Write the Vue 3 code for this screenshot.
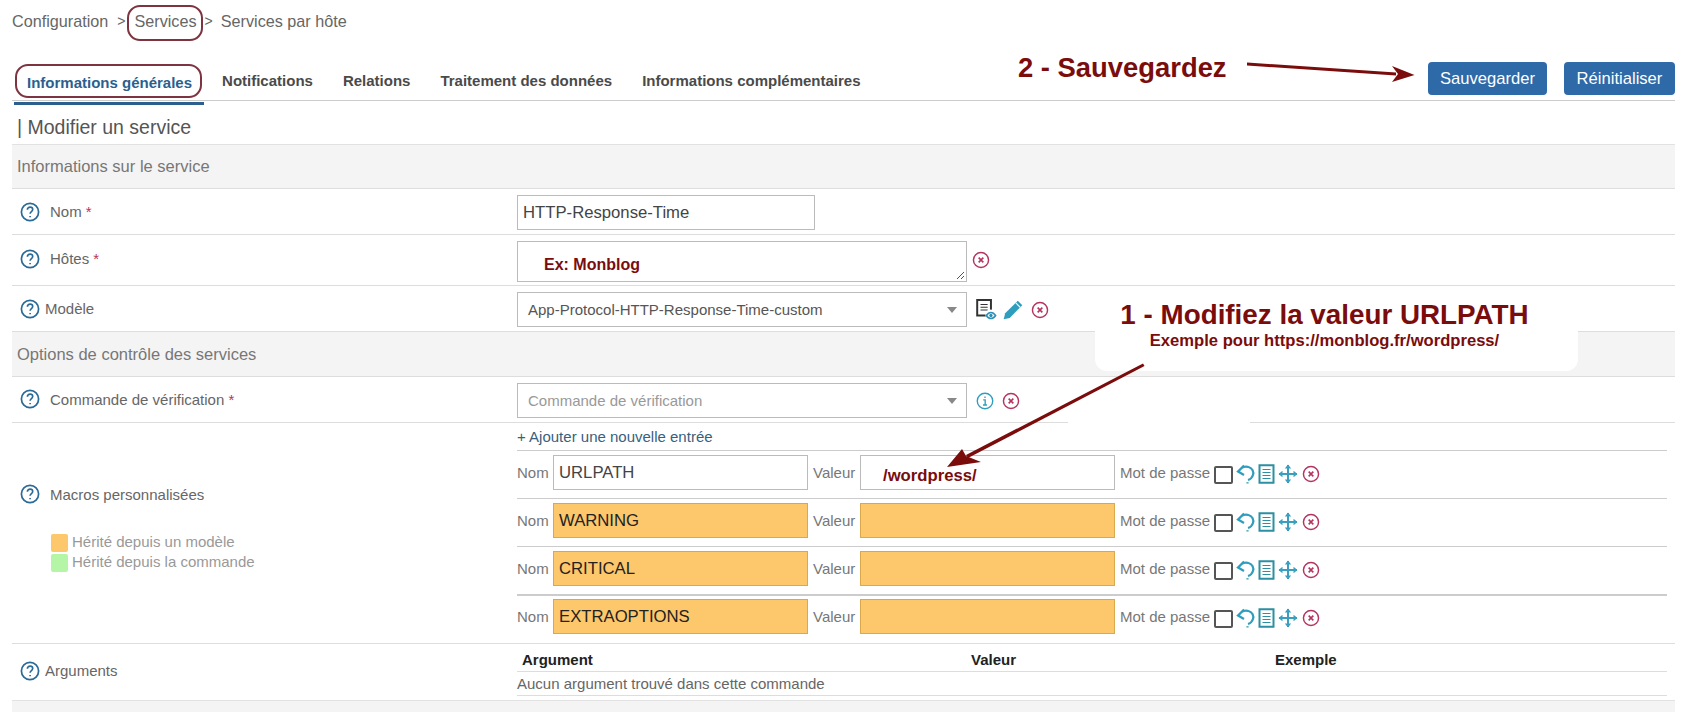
<script setup>
const macros = [
  { name: 'URLPATH', value: '/wordpress/', inherited: false },
  { name: 'WARNING', value: '', inherited: true },
  { name: 'CRITICAL', value: '', inherited: true },
  { name: 'EXTRAOPTIONS', value: '', inherited: true },
]
</script>

<template>
  <div class="page">
    <nav class="crumbs">
      <span>Configuration</span>
      <span class="sep sep-a">&gt;</span>
      <span class="circled">Services</span>
      <span class="sep sep-b">&gt;</span>
      <span>Services par hôte</span>
    </nav>

    <div class="topbar">
      <div class="tabs">
        <a class="tab active"><span class="tab-label">Informations générales</span></a>
        <a class="tab">Notifications</a>
        <a class="tab">Relations</a>
        <a class="tab">Traitement des données</a>
        <a class="tab">Informations complémentaires</a>
      </div>
      <div class="actions">
        <button class="btn">Sauvegarder</button>
        <button class="btn">Réinitialiser</button>
      </div>
    </div>

    <h2 class="title">| Modifier un service</h2>

    <div class="section">Informations sur le service</div>

    <div class="row row-nom">
      <div class="label">
        <svg class="help" viewBox="0 0 20 20"><circle cx="10" cy="10" r="8.6" /><path d="M7.4 7.8c0-1.6 1.2-2.6 2.7-2.6s2.6 1 2.6 2.3c0 2-2.6 2.1-2.6 4.3" /><path d="M10.1 13.9v1.4" /></svg>
        <span class="label-text">Nom <i>*</i></span>
      </div>
      <div class="field-cell"><div class="input input-short">HTTP-Response-Time</div></div>
    </div>

    <div class="row row-hosts">
      <div class="label">
        <svg class="help" viewBox="0 0 20 20"><circle cx="10" cy="10" r="8.6" /><path d="M7.4 7.8c0-1.6 1.2-2.6 2.7-2.6s2.6 1 2.6 2.3c0 2-2.6 2.1-2.6 4.3" /><path d="M10.1 13.9v1.4" /></svg>
        <span class="label-text">Hôtes <i>*</i></span>
      </div>
      <div class="field-cell">
        <div class="input textarea">
          <span class="red-note">Ex: Monblog</span>
          <svg class="grip" viewBox="0 0 10 10"><path d="M2 9 9 2M6 9l3-3" /></svg>
        </div>
        <svg class="ico-close" viewBox="0 0 20 20"><circle cx="10" cy="10" r="8.4" /><path d="m7.4 7.4 5.2 5.2M12.6 7.4l-5.2 5.2" /></svg>
      </div>
    </div>

    <div class="row row-model">
      <div class="label">
        <svg class="help" viewBox="0 0 20 20"><circle cx="10" cy="10" r="8.6" /><path d="M7.4 7.8c0-1.6 1.2-2.6 2.7-2.6s2.6 1 2.6 2.3c0 2-2.6 2.1-2.6 4.3" /><path d="M10.1 13.9v1.4" /></svg>
        <span class="label-text tight">Modèle</span>
      </div>
      <div class="field-cell">
        <div class="input select">App-Protocol-HTTP-Response-Time-custom</div>
        <svg class="ico-doc-eye" viewBox="0 0 20 20">
          <path class="dark" d="M2 1h12.5v14H2z" />
          <path class="dark thin" d="M5 5h6.5M5 7.5h6.5M5 10h6.5" />
          <circle class="eye-bg" cx="14.5" cy="14.5" r="5" />
          <path class="eye" d="M10.3 15c1.2-1.8 2.7-2.7 4.2-2.7s3 .9 4.2 2.7c-1.2 1.8-2.7 2.7-4.2 2.7s-3-.9-4.2-2.7z" />
          <circle class="eye-dot" cx="14.5" cy="15" r="1.5" />
        </svg>
        <svg class="ico-pencil" viewBox="0 0 20 20"><path d="M14.4 1.5 18.5 5.6 7 17.2 1.5 18.5 2.9 13z" /><path class="cut" d="m12.6 3.6 4 4" /></svg>
        <svg class="ico-close" viewBox="0 0 20 20"><circle cx="10" cy="10" r="8.4" /><path d="m7.4 7.4 5.2 5.2M12.6 7.4l-5.2 5.2" /></svg>
      </div>
    </div>

    <div class="section">Options de contrôle des services</div>

    <div class="row row-command">
      <div class="label">
        <svg class="help" viewBox="0 0 20 20"><circle cx="10" cy="10" r="8.6" /><path d="M7.4 7.8c0-1.6 1.2-2.6 2.7-2.6s2.6 1 2.6 2.3c0 2-2.6 2.1-2.6 4.3" /><path d="M10.1 13.9v1.4" /></svg>
        <span class="label-text">Commande de vérification <i>*</i></span>
      </div>
      <div class="field-cell">
        <div class="input select placeholder">Commande de vérification</div>
        <svg class="ico-info" viewBox="0 0 20 20"><circle cx="10" cy="10" r="8.6" /><path d="M8 8.7h2.2v5.500M7.800 14.400h4.400" /><path d="M10 5v1.600" /></svg>
        <svg class="ico-close" viewBox="0 0 20 20"><circle cx="10" cy="10" r="8.4" /><path d="m7.4 7.4 5.2 5.2M12.6 7.4l-5.2 5.2" /></svg>
      </div>
    </div>

    <div class="row row-macros">
      <div class="macro-side">
        <div class="label">
          <svg class="help" viewBox="0 0 20 20"><circle cx="10" cy="10" r="8.6" /><path d="M7.4 7.8c0-1.6 1.2-2.6 2.7-2.6s2.6 1 2.6 2.3c0 2-2.6 2.1-2.6 4.3" /><path d="M10.1 13.9v1.4" /></svg>
          <span class="label-text">Macros personnalisées</span>
        </div>
        <div class="legend">
          <div class="legend-item"><span class="swatch orange"></span>Hérité depuis un modèle</div>
          <div class="legend-item"><span class="swatch green"></span>Hérité depuis la commande</div>
        </div>
      </div>
      <div class="macro-list">
        <a class="add-link">+ Ajouter une nouvelle entrée</a>
        <div v-for="m in macros" :key="m.name" class="macro-row">
          <span class="mini-label name-label">Nom</span>
          <div class="macro-input" :class="{ inherited: m.inherited }">{{ m.name }}</div>
          <span class="mini-label value-label">Valeur</span>
          <div class="macro-input" :class="{ inherited: m.inherited }"><span v-if="m.value" class="red-value">{{ m.value }}</span></div>
          <span class="mini-label pass-label">Mot de passe</span>
          <span class="checkbox"></span>
          <svg class="ico-undo" viewBox="0 0 20 20"><path d="M8 1.500 2 7.500 8 11M3 7C5 3.500 9 2 12.500 3 16.500 4 18 8 17 11 16 14 14 15.500 12 16" /><path d="M11.500 18.200v1.300" /></svg>
          <svg class="ico-list" viewBox="0 0 17 20"><path d="M1.500 1.300h14v17.400h-14z" /><path class="thin" d="M4.500 5.500h8M4.500 8.500h8M4.500 11.500h8M4.500 14.500h8" /></svg>
          <svg class="ico-move" viewBox="0 0 20 20"><path class="thin-move" d="M10 1v18M1 10h18" /><path class="fill" d="M10 .5 13.200 4.500H6.800zM10 19.500 6.800 15.500h6.400zM.5 10 4.500 6.800v6.400zM19.500 10 15.500 13.200V6.800z" /></svg>
          <svg class="ico-close small" viewBox="0 0 20 20"><circle cx="10" cy="10" r="8.4" /><path d="m7.4 7.4 5.2 5.2M12.6 7.4l-5.2 5.2" /></svg>
        </div>
      </div>
    </div>

    <div class="row row-args">
      <div class="label">
        <svg class="help" viewBox="0 0 20 20"><circle cx="10" cy="10" r="8.6" /><path d="M7.4 7.8c0-1.6 1.2-2.6 2.7-2.6s2.6 1 2.6 2.3c0 2-2.6 2.1-2.6 4.3" /><path d="M10.1 13.9v1.4" /></svg>
        <span class="label-text tight">Arguments</span>
      </div>
      <div class="args">
        <div class="args-head">
          <span class="col-arg">Argument</span>
          <span class="col-val">Valeur</span>
          <span>Exemple</span>
        </div>
        <div class="args-empty">Aucun argument trouvé dans cette commande</div>
      </div>
    </div>

    <div class="section section-end"></div>

    <!-- annotations pasted on top of the screenshot -->
    <div class="note-save">2 - Sauvegardez</div>
    <div class="line-gap"></div>
    <div class="callout">
      <div class="callout-title">1 - Modifiez la valeur URLPATH</div>
      <div class="callout-sub">Exemple pour https://monblog.fr/wordpress/</div>
    </div>
    <svg class="arrows" viewBox="0 0 1688 712">
      <path d="M1247 62.500 1396 72.500 1396 75.500 1247 65.500z" />
      <path d="M1414.500 75 1392 66 1398 74 1392 82z" />
      <path d="M1143 363.500 1144.500 366 968 458 966 455z" />
      <path d="M947 467 962 449 966 456 981 462z" />
    </svg>
  </div>
</template>

<style scoped>
.page {
  position: relative;
  width: 1688px;
  height: 712px;
  overflow: hidden;
  box-sizing: border-box;
  padding: 0 13px 0 12px;
  background: #fff;
  font-family: "Liberation Sans", Arial, sans-serif;
  font-size: 15px;
  color: #666;
}

.crumbs {
  height: 44px;
  display: flex;
  align-items: flex-start;
  padding-top: 12px;
  box-sizing: border-box;
  font-size: 16.2px;
  line-height: 19px;
  color: #666;
}

.sep {
  font-size: 14px;
}

.sep-a {
  margin: 0 9px;
}

.sep-b {
  margin: 0 8px;
}

.circled {
  position: relative;
}

.circled::after {
  content: "";
  position: absolute;
  left: -7px;
  right: -6px;
  top: -7px;
  height: 36px;
  box-sizing: border-box;
  border: 2px solid #7d3340;
  border-radius: 13px;
}

.topbar {
  height: 57px;
  display: flex;
  justify-content: space-between;
  border-bottom: 1px solid #ccc;
  box-sizing: border-box;
}

.tabs {
  display: flex;
  align-items: flex-start;
  padding-top: 28px;
}

.tab {
  padding: 0 15px;
  font-size: 15px;
  line-height: 18px;
  font-weight: 700;
  color: #4a4a4a;
}

.tab.active {
  position: relative;
  height: 28px;
  padding: 2px 12px 0 13px;
  margin: 0 3px 0 2px;
  color: #2b5f8e;
  border-bottom: 3px solid #2b5f8e;
}

.tab-label {
  display: block;
}

.tab.active::after {
  content: "";
  position: absolute;
  left: 1px;
  right: 2px;
  top: -8px;
  height: 34px;
  box-sizing: border-box;
  border: 2px solid #7d3340;
  border-radius: 13px;
}

.actions {
  display: flex;
  align-items: flex-start;
  gap: 17px;
  padding-top: 18px;
}

.btn {
  height: 33px;
  padding: 0;
  border: 0;
  border-radius: 4px;
  background: #2e69a8;
  color: #fff;
  font: 16.6px "Liberation Sans", Arial, sans-serif;
}

.btn:first-child {
  width: 119px;
}

.btn:last-child {
  width: 111px;
}

.title {
  margin: 0;
  height: 43px;
  padding: 15px 0 0 5px;
  box-sizing: border-box;
  font-size: 19.5px;
  line-height: 23px;
  font-weight: 400;
  color: #555;
}

.section {
  height: 45px;
  padding-left: 5px;
  box-sizing: border-box;
  display: flex;
  align-items: center;
  background: #f4f4f4;
  border-top: 1px solid #e2e2e2;
  border-bottom: 1px solid #ddd;
  font-size: 16.5px;
  color: #777;
}

.row {
  display: grid;
  grid-template-columns: 505px 1fr;
  box-sizing: border-box;
  border-bottom: 1px solid #ddd;
}

.row-nom { height: 46px; }
.row-hosts { height: 51px; }
.row-model { height: 46px; }
.row-command { height: 46px; }
.row-macros { height: 221px; }
.row-args { height: 57px; border-bottom-color: #e2e2e2; }

.row-model + .section {
  border-top: 0;
}

.row-hosts .label,
.row-args .label {
  padding-bottom: 3px;
}

.row-command .label {
  padding-bottom: 1px;
}

.label {
  display: flex;
  align-items: center;
  padding-left: 8px;
}

.label-text {
  margin-left: 10px;
  color: #666;
  font-size: 15px;
}

.label-text.tight {
  margin-left: 5px;
}

.label-text i {
  font-style: normal;
  color: #b5345f;
}

.help {
  width: 20px;
  height: 20px;
  flex: none;
  fill: none;
  stroke: #2a6a96;
  stroke-width: 1.7;
}

.field-cell {
  display: flex;
  align-items: center;
  padding-top: 2px;
}

.input {
  box-sizing: border-box;
  height: 35px;
  display: flex;
  align-items: center;
  border: 1px solid #bbb;
  padding: 0 5px;
  font-size: 16.7px;
  color: #444;
}

.input-short {
  width: 298px;
}

.textarea {
  position: relative;
  width: 450px;
  height: 41px;
  padding: 7px 0 0 26px;
}

.grip {
  position: absolute;
  right: 1px;
  bottom: 1px;
  width: 10px;
  height: 10px;
  fill: none;
  stroke: #555;
  stroke-width: 1;
}

.red-note {
  font-weight: 700;
  font-size: 16px;
  color: #7a0c0c;
}

.select {
  position: relative;
  width: 450px;
  padding-left: 10px;
  font-size: 15px;
  color: #555;
}

.select::after {
  content: "";
  position: absolute;
  right: 9px;
  top: 14px;
  border-left: 5px solid transparent;
  border-right: 5px solid transparent;
  border-top: 6px solid #888;
}

.placeholder {
  color: #999;
}

.ico-close {
  width: 18px;
  height: 18px;
  margin-left: 5px;
  flex: none;
  fill: none;
  stroke: #b5345f;
  stroke-width: 1.6;
}

.ico-close path {
  stroke-width: 1.8;
}

.row-hosts .ico-close {
  margin-top: -2px;
}

.ico-doc-eye {
  width: 22px;
  height: 22px;
  margin-left: 8px;
  flex: none;
}

.ico-doc-eye .dark {
  fill: #fff;
  stroke: #333;
  stroke-width: 1.8;
}

.ico-doc-eye .thin {
  stroke-width: 1;
}

.eye-bg {
  fill: #fff;
}

.eye {
  fill: #fff;
  stroke: #2f8fb5;
  stroke-width: 1.5;
}

.eye-dot {
  fill: #2f8fb5;
}

.ico-pencil {
  width: 22px;
  height: 22px;
  margin-left: 5px;
  flex: none;
  fill: #2f9dbd;
}

.ico-pencil .cut {
  fill: none;
  stroke: #fff;
  stroke-width: 1;
}

.row-model .ico-close {
  margin-left: 7px;
}

.ico-info {
  width: 18px;
  height: 18px;
  margin-left: 9px;
  flex: none;
  fill: none;
  stroke: #2f9dbd;
  stroke-width: 1.5;
}

.ico-info + .ico-close {
  margin-left: 8px;
}

.macro-side {
  padding-top: 61px;
}

.legend {
  margin-top: 28px;
  margin-left: 39px;
  font-size: 15px;
  line-height: 20px;
  color: #999;
}

.legend-item {
  display: flex;
  align-items: flex-end;
  height: 20px;
}

.swatch {
  width: 17px;
  height: 18px;
  border-radius: 2px;
  margin-right: 4px;
}

.orange { background: #fdc76b; }
.green { background: #b4f5a6; }

.macro-list {
  padding-right: 8px;
}

.add-link {
  display: block;
  height: 27px;
  line-height: 28px;
  font-size: 15px;
  color: #3a5f7d;
}

.macro-row {
  display: flex;
  align-items: center;
  height: 48px;
  box-sizing: border-box;
  padding-bottom: 4px;
  border-top: 1px solid #ccc;
}

.macro-row:last-child {
  height: 49px;
  border-top: 2px solid #ccc;
  padding-bottom: 6px;
}

.mini-label {
  font-size: 15px;
  color: #777;
}

.name-label { width: 36px; }
.value-label { width: 52px; padding-left: 5px; box-sizing: border-box; }
.pass-label { width: 99px; padding-left: 5px; box-sizing: border-box; white-space: nowrap; }

.macro-input {
  box-sizing: border-box;
  width: 255px;
  height: 35px;
  display: flex;
  align-items: center;
  padding-left: 5px;
  border: 1px solid #bbb;
  font-size: 16.7px;
  color: #444;
}

.macro-input.inherited {
  background: #fdc76b;
  border-color: #d9a94e;
  color: #222;
}

.red-value {
  margin: 6px 0 0 17px;
  font-weight: 700;
  font-size: 16.7px;
  color: #7a0c0c;
}

.checkbox {
  box-sizing: border-box;
  width: 19px;
  height: 18px;
  margin-top: 4px;
  border: 2px solid #555;
  border-radius: 2px;
  flex: none;
}

.ico-undo,
.ico-list,
.ico-move {
  flex: none;
  margin-top: 2px;
}

.ico-undo {
  width: 20px;
  height: 20px;
  margin-left: 3px;
  fill: none;
  stroke: #2f9dbd;
  stroke-width: 2.2;
}

.ico-list {
  width: 17px;
  height: 20px;
  margin-left: 2px;
  fill: none;
  stroke: #2d8fa3;
  stroke-width: 2;
}

.ico-list .thin {
  stroke-width: 1;
}

.ico-move {
  width: 20px;
  height: 20px;
  margin-left: 3px;
}

.thin-move {
  fill: none;
  stroke: #3a9fbf;
  stroke-width: 2;
}

.fill {
  fill: #3a9fbf;
}

.ico-close.small {
  margin-left: 4px;
  margin-top: 2px;
}

.args-head {
  display: flex;
  height: 28px;
  align-items: center;
  padding: 3px 0 0 5px;
  box-sizing: border-box;
  margin-right: 8px;
  border-bottom: 1px solid #ddd;
  font-weight: 700;
  font-size: 15px;
  color: #222;
}

.col-arg { width: 449px; }
.col-val { width: 304px; }

.args-empty {
  height: 23px;
  line-height: 23px;
  margin-right: 8px;
  border-bottom: 1px solid #ddd;
  font-size: 15px;
  color: #666;
}

.section-end {
  height: 30px;
  border: 0;
}

.note-save {
  position: absolute;
  left: 1018px;
  top: 53px;
  font-size: 27.4px;
  line-height: 30px;
  font-weight: 700;
  color: #7a0c0c;
}

.line-gap {
  position: absolute;
  left: 1068px;
  top: 420px;
  width: 182px;
  height: 6px;
  background: #fff;
}

.callout {
  position: absolute;
  left: 1095px;
  top: 300px;
  width: 483px;
  height: 71px;
  padding-right: 24px;
  box-sizing: border-box;
  border-radius: 12px;
  background: #fff;
  text-align: center;
  color: #7a0c0c;
  font-weight: 700;
}

.callout-title {
  font-size: 27.8px;
  line-height: 30px;
}

.callout-sub {
  font-size: 16.6px;
  line-height: 18px;
  margin-top: 2px;
}

.arrows {
  position: absolute;
  left: 0;
  top: 0;
  width: 1688px;
  height: 712px;
  pointer-events: none;
  fill: #7a0c0c;
}
</style>

<style>
html, body {
  margin: 0;
  background: #fff;
}
</style>
